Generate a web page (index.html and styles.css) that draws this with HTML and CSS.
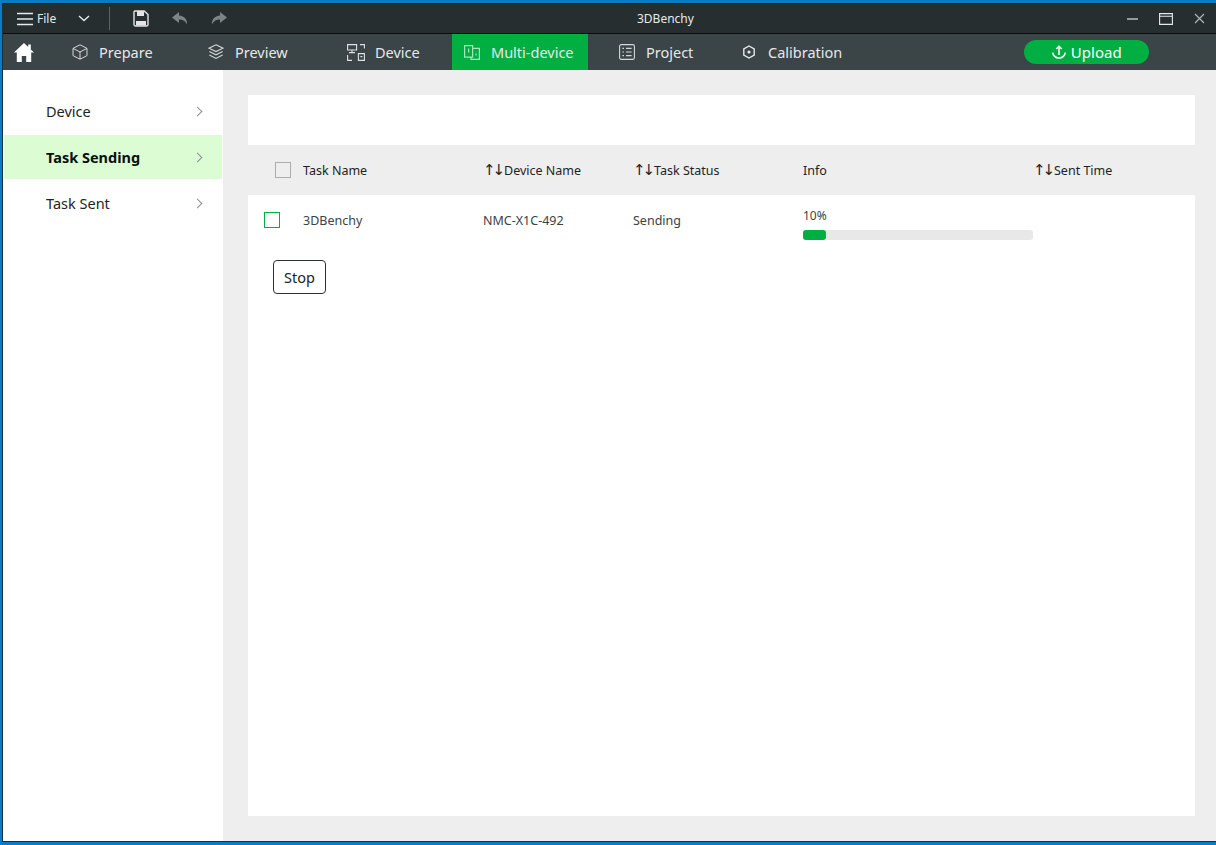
FILE: index.html
```html
<!DOCTYPE html>
<html lang="en">

<head>
    <meta charset="UTF-8">
    <meta name="viewport" content="width=device-width, initial-scale=1.0">
    <title>3DBenchy</title>
    <link rel="stylesheet" href="styles.css">
</head>

<body>

    <div class="window">
        <header class="titlebar">
            <svg class="ico-menu" width="16" height="14" viewBox="0 0 16 14" fill="none" stroke="#e8eaea" stroke-width="1.4">
                <path d="M0 1.5h16M0 7h16M0 12.5h16" />
            </svg>
            <span class="file-label">File</span>
            <svg class="ico-chevron" width="12" height="7" viewBox="0 0 12 7" fill="none" stroke="#e8eaea" stroke-width="1.4">
                <path d="M1 1l5 4.5L11 1" />
            </svg>
            <span class="title-divider"></span>
            <svg class="ico-save" width="16" height="17" viewBox="0 0 16 17" fill="none">
                <path d="M1.8 1h9.4L15 4.6v10a1.4 1.4 0 0 1-1.4 1.4H2.4A1.4 1.4 0 0 1 1 14.6V1.8z" stroke="#e4e6e6" stroke-width="1.4" />
                <rect x="4" y="1" width="7" height="5" fill="#e4e6e6" />
                <rect x="3" y="11" width="10" height="4.5" fill="#e4e6e6" />
            </svg>
            <svg class="ico-undo" width="16" height="13" viewBox="0 0 16 13">
                <path d="M7 0L0 5.5 7 11V7.6c3.6 0 6 1.2 8 4.6.4-4.6-2.6-8-8-8.6z" fill="#7d8486" />
            </svg>
            <svg class="ico-redo" width="16" height="13" viewBox="0 0 16 13">
                <path d="M9 0l7 5.5L9 11V7.6c-3.6 0-6 1.2-8 4.6C.6 7.6 3.6 4.2 9 3.6z" fill="#7d8486" />
            </svg>
            <span class="doc-title">3DBenchy</span>
            <div class="win-controls">
                <svg width="11" height="11" viewBox="0 0 11 11" fill="none" stroke="#dfe2e2" stroke-width="1.2">
                    <path d="M0 6h11" />
                </svg>
                <svg width="14" height="12" viewBox="0 0 14 12" fill="none" stroke="#e8eaea" stroke-width="1.1">
                    <path d="M.6.6h12.8v10.8H.6zM.6 3.2h12.8" />
                </svg>
                <svg width="11" height="11" viewBox="0 0 11 11" fill="none" stroke="#b5babb" stroke-width="1.1">
                    <path d="M1 1l9 9M10 1l-9 9" />
                </svg>
            </div>
        </header>

        <nav class="tabbar">
            <a class="home-link">
                <svg width="20" height="19" viewBox="0 0 20 19">
                    <path d="M10 0L0 9.5h2.8V19h5v-6h4.4v6h5V9.5H20L16.8 6.4V1.5h-2.6v2.4z" fill="#fff" />
                </svg>
            </a>
            <a class="tab tab-prepare">
                <svg width="16" height="16" viewBox="0 0 16 16" fill="none" stroke="#d5d8d8" stroke-width="1">
                    <path d="M8 .8l7 3.6v7.2l-7 3.6-7-3.6V4.4zM1 4.4l7 3.6 7-3.6M8 8v7.2" />
                </svg>
                Prepare
            </a>
            <a class="tab tab-preview">
                <svg width="16" height="16" viewBox="0 0 16 16" fill="none" stroke="#d5d8d8" stroke-width="1.1">
                    <path d="M8 .8l7 3.4-7 3.4-7-3.4zM1.4 7.6L8 10.8l6.6-3.2M1.4 11L8 14.4l6.6-3.4" />
                </svg>
                Preview
            </a>
            <a class="tab tab-device">
                <svg width="18" height="17" viewBox="0 0 18 17" fill="none" stroke="#e0e2e2" stroke-width="1.1">
                    <path d="M.6.6h9v5.4h-9zM5 6v2.4M2 8.6h6M13 .6h4.4v4M.6 11v5.4h4.4M11.4 9.6h6v6.8h-6zM13.4 12.6h2" />
                </svg>
                Device
            </a>
            <a class="tab tab-multi active">
                <svg width="16" height="15" viewBox="0 0 16 15" fill="none" stroke="#a6e6bd" stroke-width="1.2">
                    <path d="M.6.6h8v11.6h-8zM8.6 3.4h6.8v11h-8.4v-2.2M4.6 3.4v4M12 8.5v2" />
                </svg>
                Multi-device
            </a>
            <a class="tab tab-project">
                <svg width="16" height="16" viewBox="0 0 16 16" fill="none" stroke="#d5d8d8" stroke-width="1.1">
                    <rect x=".6" y=".6" width="14.8" height="14.8" rx="1.6" />
                    <path d="M3.4 4.4h1.6M3.4 8h1.6M3.4 11.6h1.6M7 4.4h5.6M7 8h5.6M7 11.6h5.6" />
                </svg>
                Project
            </a>
            <a class="tab tab-calibration">
                <svg width="14" height="14" viewBox="0 0 14 14" fill="none" stroke="#e8eaea" stroke-width="1.4">
                    <path d="M7 1l5.2 3v6L7 13l-5.2-3V4z" />
                    <circle cx="7" cy="7" r="1.6" fill="#e8eaea" stroke="none" />
                </svg>
                Calibration
            </a>
            <button class="upload-btn">
                <svg width="14" height="14" viewBox="0 0 14 14" fill="none" stroke="#fff" stroke-width="1.5">
                    <path d="M7 10V1.4M4.2 4L7 1.2 9.8 4M.8 7.4a6.2 5.6 0 0 0 12.4 0" />
                </svg>
                Upload
            </button>
        </nav>

        <div class="workspace">
            <aside class="sidebar">
                <div class="side-item">Device<span class="side-arrow"></span></div>
                <div class="side-item active">Task Sending<span class="side-arrow"></span></div>
                <div class="side-item">Task Sent<span class="side-arrow"></span></div>
            </aside>

            <main class="content">
                <div class="toolbar-panel"></div>

                <div class="task-row task-head">
                    <div class="check-cell"><span class="checkbox"></span></div>
                    <div>Task Name</div>
                    <div class="sortable"><span class="sort-arrows">↑↓</span>Device Name</div>
                    <div class="sortable"><span class="sort-arrows">↑↓</span>Task Status</div>
                    <div>Info</div>
                    <div class="sortable"><span class="sort-arrows">↑↓</span>Sent Time</div>
                </div>

                <div class="task-list">
                    <div class="task-row task-item">
                        <div class="check-cell"><span class="checkbox green"></span></div>
                        <div>3DBenchy</div>
                        <div>NMC-X1C-492</div>
                        <div>Sending</div>
                        <div class="info-cell">
                            <div class="percent">10%</div>
                            <div class="progress">
                                <div class="progress-fill" style="width: 10%"></div>
                            </div>
                        </div>
                        <div></div>
                    </div>
                    <button class="stop-btn">Stop</button>
                </div>
            </main>
        </div>
    </div>

</body>

</html>
```

FILE: styles.css
```css
* {
    box-sizing: border-box;
}

html,
body {
    height: 100%;
}

body {
    margin: 0;
    background-color: #0a7cc6;
    font-family: "Noto Sans", "Open Sans", sans-serif;
    overflow: hidden;
}

.window {
    display: flex;
    flex-direction: column;
    height: 842px;
    margin: 3px 0 0 2px;
    border-left: 1px solid #17303c;
    border-bottom: 1px solid #17303c;
    height: 839px;
    background-color: #eeeeee;
}

/* title bar */
.titlebar {
    display: flex;
    align-items: center;
    height: 31px;
    flex-shrink: 0;
    background-color: #262e30;
    border-top: 1px solid #15191a;
    border-bottom: 1px solid #0c0e0f;
    color: #e8eaea;
    font-size: 12px;
}

.ico-menu {
    margin-left: 14px;
}

.file-label {
    margin-left: 4px;
    width: 41px;
}

.title-divider {
    width: 1px;
    height: 23px;
    margin-left: 19px;
    background-color: #5b6365;
}

.ico-save {
    margin-left: 23px;
}

.ico-undo {
    margin-left: 23px;
}

.ico-redo {
    margin-left: 23px;
}

.doc-title {
    margin-left: 410px;
}

.win-controls {
    display: flex;
    align-items: center;
    gap: 21px;
    margin-left: auto;
    margin-right: 11px;
}

/* tabs */
.tabbar {
    display: flex;
    align-items: stretch;
    height: 36px;
    flex-shrink: 0;
    background-color: #3b4446;
    color: #e6e9e9;
    font-size: 14.5px;
}

.home-link {
    display: flex;
    align-items: center;
    width: 57px;
    padding-left: 11px;
}

.tab {
    display: flex;
    align-items: center;
    gap: 11px;
    padding-left: 12px;
}

.tab-prepare {
    width: 136px;
}

.tab-preview {
    width: 139px;
}

.tab-device {
    width: 117px;
    gap: 10px;
}

.tab-multi {
    width: 136px;
}

.tab-project {
    width: 123px;
    margin-left: 19px;
}

.tab-calibration {
    gap: 12px;
}

.tab.active {
    background-color: #00ae42;
}

.upload-btn {
    display: flex;
    align-items: center;
    justify-content: center;
    gap: 5px;
    width: 125px;
    height: 24px;
    margin-top: 6px;
    margin-left: 182px;
    padding: 0;
    border: none;
    border-radius: 12px;
    background-color: #00ae42;
    color: #fff;
    font-family: inherit;
    font-size: 15px;
}

/* main area */
.workspace {
    display: flex;
    flex: 1;
    min-height: 0;
}

.sidebar {
    display: flex;
    flex-direction: column;
    gap: 2px;
    width: 220px;
    flex-shrink: 0;
    padding-top: 19px;
    background-color: #fff;
}

.side-item {
    display: flex;
    align-items: center;
    justify-content: space-between;
    height: 44px;
    margin-left: 1px;
    margin-right: 1px;
    padding: 0 20px 0 42px;
    color: #1d2325;
    font-size: 14.5px;
}

.side-item.active {
    background-color: #dcfcd4;
    font-weight: 700;
    color: #0b0f10;
}

.side-arrow {
    width: 7px;
    height: 7px;
    margin-right: 1px;
    border-top: 1px solid #8a8f90;
    border-right: 1px solid #8a8f90;
    transform: rotate(45deg);
}

.content {
    display: flex;
    flex-direction: column;
    flex: 1;
    padding: 25px 21px 25px 25px;
}

.toolbar-panel {
    height: 50px;
    flex-shrink: 0;
    background-color: #fff;
}

.task-row {
    display: grid;
    grid-template-columns: 55px 180px 150px 170px 230px 1fr;
    align-items: center;
    font-size: 12.5px;
}

.task-head {
    height: 50px;
    flex-shrink: 0;
    color: #1d2325;
}

.sortable {
    display: flex;
    align-items: center;
    gap: 4px;
}

.sort-arrows {
    width: 17px;
    font-family: "DejaVu Sans", sans-serif;
    font-size: 15px;
    letter-spacing: -3px;
    white-space: nowrap;
}

.check-cell {
    display: flex;
}

.task-head .checkbox {
    margin-left: 27px;
}

.task-item .checkbox {
    margin-left: 16px;
    margin-top: -1px;
}

.checkbox {
    display: block;
    width: 16px;
    height: 16px;
    border: 1px solid #acacac;
}

.checkbox.green {
    border-color: #00ae42;
}

.task-list {
    flex: 1;
    background-color: #fff;
}

.task-item {
    height: 50px;
    color: #3c4244;
}

.percent {
    font-size: 12px;
    line-height: 16px;
    margin-top: 8px;
}

.progress {
    height: 10px;
    margin-top: 6px;
    border-radius: 3px;
    background-color: #e8e8e8;
}

.progress-fill {
    height: 100%;
    border-radius: 3px;
    background-color: #00ae42;
}

.stop-btn {
    display: block;
    width: 53px;
    height: 34px;
    margin: 15px 0 0 25px;
    padding: 0;
    border: 1px solid #2c3234;
    border-radius: 4px;
    background-color: #fff;
    color: #1d2325;
    font-family: inherit;
    font-size: 14.5px;
}
```
